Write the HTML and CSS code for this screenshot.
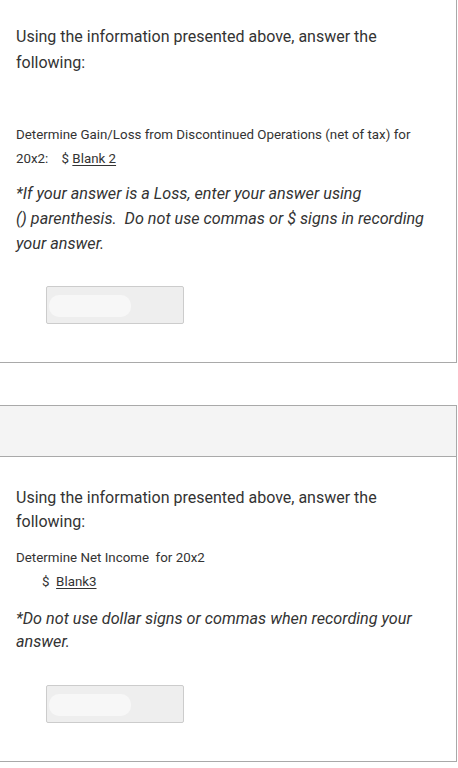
FILE: index.html
```html
<!DOCTYPE html>
<html>
<head>
<meta charset="utf-8">
<link rel="stylesheet" href="styles.css">
</head>
<body>
<div class="card card-first">
  <div class="body body-first">
    <p class="lead">Using the information presented above, answer the following:</p>
    <p class="small small-first">Determine Gain/Loss from Discontinued Operations (net of tax) for 20x2:&nbsp;&nbsp;&nbsp; $ <span class="blank">Blank 2</span></p>
    <p class="note">*If your answer is a Loss, enter your answer using<br>() parenthesis.&nbsp; Do not use commas or $ signs in recording your answer.</p>
    <div class="input"><span class="smudge"></span></div>
  </div>
</div>
<div class="card card-second">
  <div class="header"></div>
  <div class="body body-second">
    <p class="lead lead-second">Using the information presented above, answer the following:</p>
    <p class="small small-second">Determine Net Income&nbsp; for 20x2</p>
    <p class="small indent">$&nbsp; <span class="blank">Blank3</span></p>
    <p class="note note-second">*Do not use dollar signs or commas when recording your answer.</p>
    <div class="input input-second"><span class="smudge"></span></div>
  </div>
</div>
</body>
</html>
```
FILE: styles.css
```css
html, body {
  margin: 0;
  padding: 0;
  background: #fff;
}
body {
  font-family: Roboto, "Liberation Sans", sans-serif;
  color: #333;
  width: 458px;
}
p { margin: 0; }
.card {
  box-sizing: border-box;
  width: 457px;
  border-right: 1px solid #a9a9a9;
  border-bottom: 1px solid #a9a9a9;
  background: #fff;
}
.card-second {
  margin-top: 42px;
  border-top: 1px solid #a9a9a9;
}
.header {
  height: 50px;
  background: #f4f4f4;
  border-bottom: 1px solid #a9a9a9;
}
.body {
  padding: 0 16px;
}
.body-first {
  padding-top: 24px;
  padding-bottom: 38px;
}
.body-second {
  padding-top: 29px;
  padding-bottom: 38px;
}
.lead {
  font-size: 16px;
  line-height: 26px;
  color: #333;
}
.lead-second { line-height: 24px; }
.small {
  font-size: 13.33px;
  line-height: 24px;
  color: #333;
}
.small-first { margin-top: 47px; }
.small-second { margin-top: 12px; }
.indent { padding-left: 26px; }
.blank {
  text-decoration: underline;
  text-underline-offset: 2px;
}
.note {
  font-style: italic;
  font-size: 16.2px;
  line-height: 25px;
  color: #333;
  margin-top: 10px;
}
.note-second {
  margin-top: 13px;
  line-height: 23px;
}
.input {
  box-sizing: border-box;
  margin-top: 30px;
  margin-left: 30px;
  width: 138px;
  height: 38px;
  background: #eee;
  border: 1px solid #ccc;
  border-radius: 2px;
  position: relative;
}
.input-second { margin-top: 32px; }
.smudge {
  position: absolute;
  left: 2px;
  top: 8px;
  width: 82px;
  height: 22px;
  background: #f7f7f7;
  border-radius: 10px;
}
```
